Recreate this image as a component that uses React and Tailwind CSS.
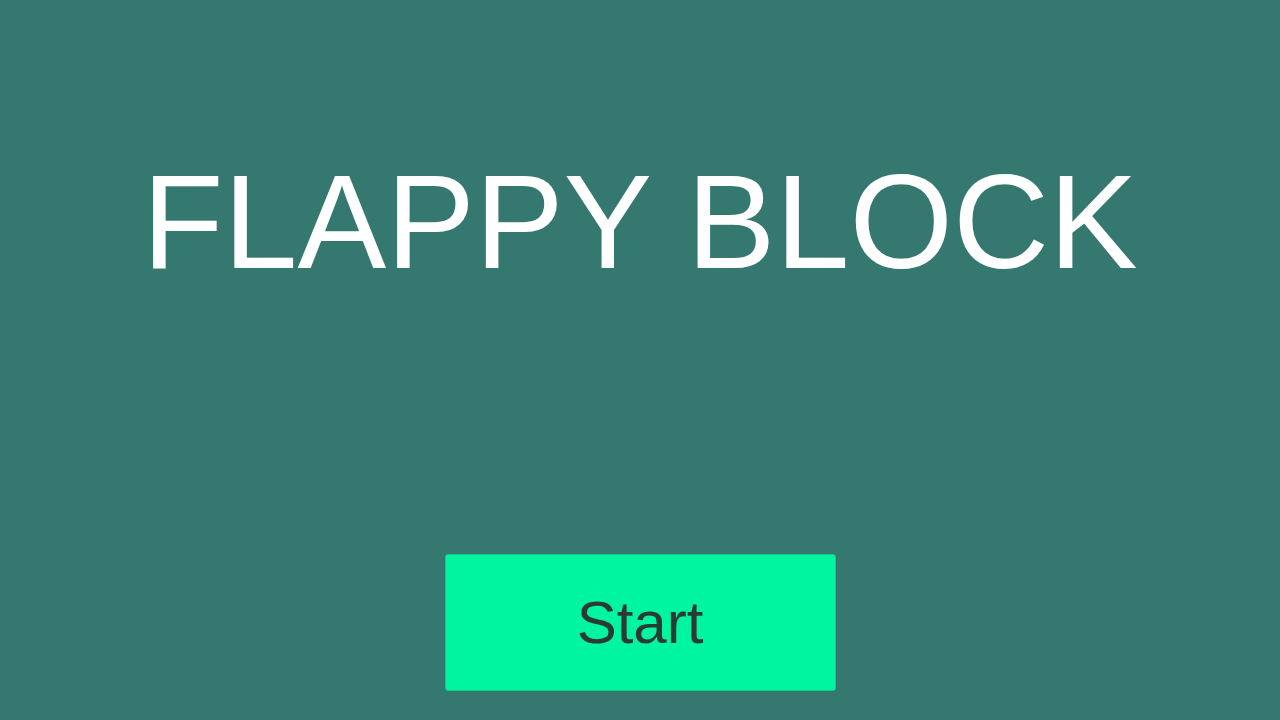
export default function App() {
  return (
    <div className="w-full h-screen bg-[#34786f] flex flex-col items-center overflow-hidden" style={{ fontFamily: '"Liberation Sans", Arial, sans-serif' }}>
      <h1 className="mt-[156px] text-[133px] leading-none text-white font-normal whitespace-nowrap">
        FLAPPY BLOCK
      </h1>
      <button className="mt-[265px] w-[391px] h-[137px] bg-[#00f5a0] border border-[#14c98a] rounded-[3px] flex items-center justify-center text-[60px] text-[#2c3a35]">
        Start
      </button>
    </div>
  )
}
